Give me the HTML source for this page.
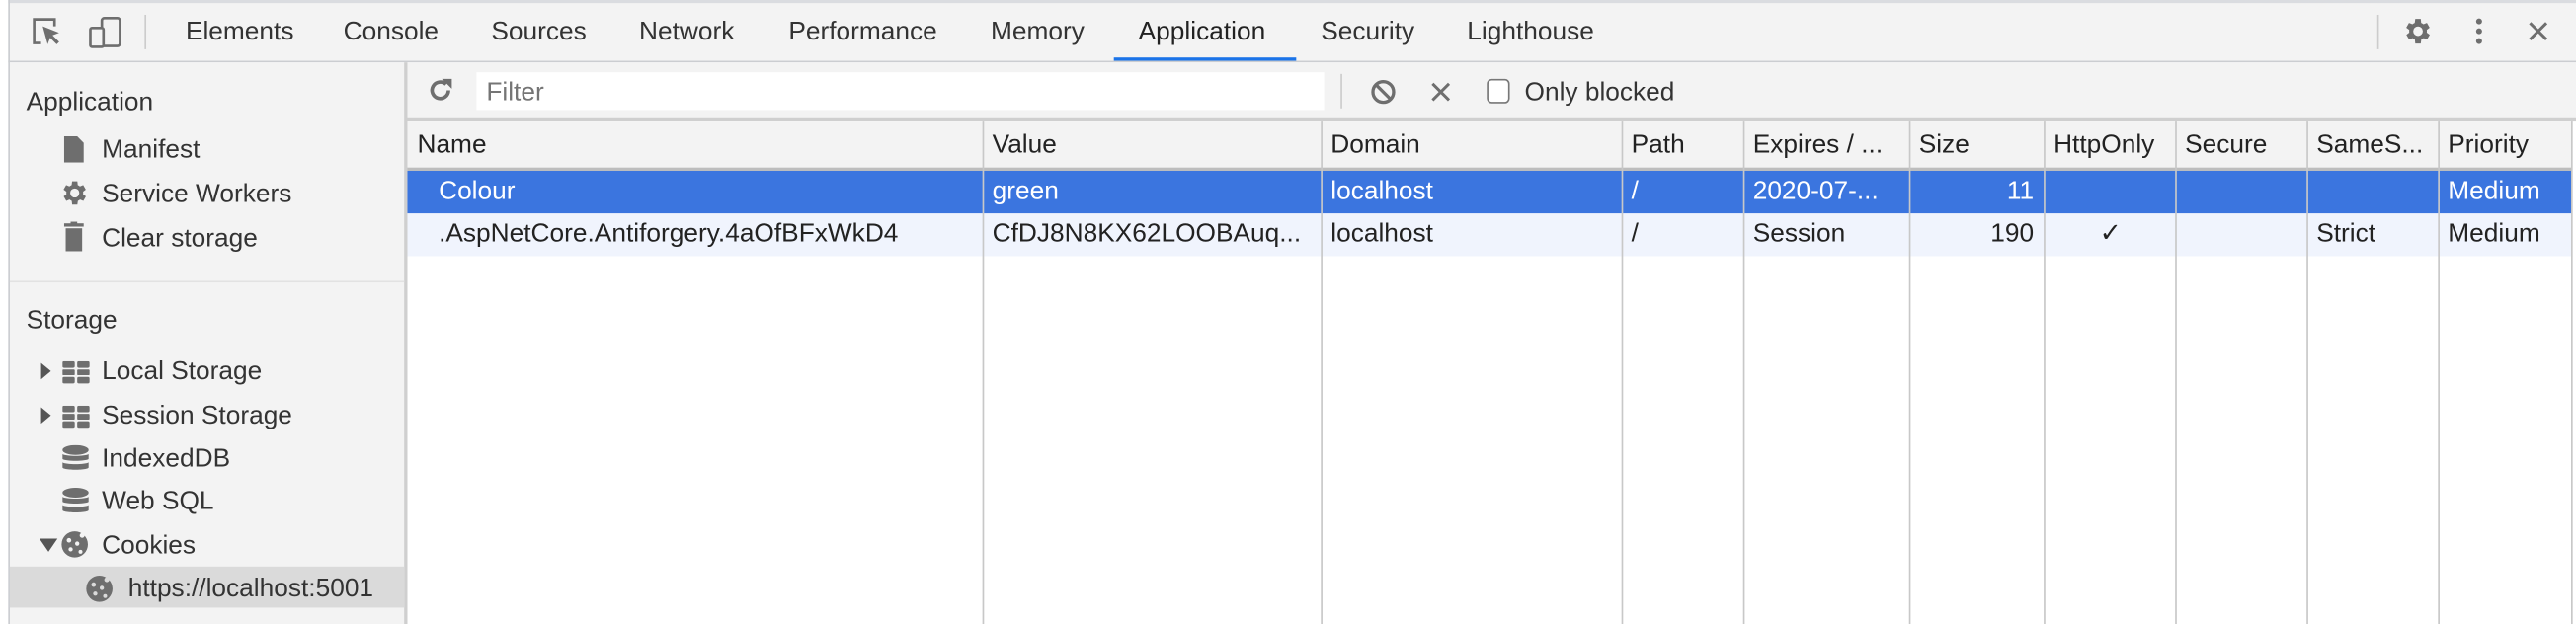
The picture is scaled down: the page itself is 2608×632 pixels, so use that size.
<!DOCTYPE html>
<html><head><meta charset="utf-8"><style>
html,body{margin:0;padding:0;background:#fff;width:2608px;height:632px;overflow:hidden}
#w{position:absolute;left:0;top:0;width:1568px;height:380px;transform:scale(1.66327);transform-origin:0 0;font-family:"Liberation Sans",sans-serif;color:#333;font-size:15.8px}
.a{position:absolute;white-space:nowrap;line-height:18px}
.ico{fill:#6e6e6e}
</style></head><body><div id="w">
<div class="a" style="left:5px;top:0;width:1563px;height:2px;background:#dadce0"></div>
<div class="a" style="left:5px;top:2px;width:1563px;height:35px;background:#f3f3f3"></div>
<div class="a" style="left:5px;top:37px;width:1563px;height:1px;background:#cbcdd1"></div>
<div class="a" style="left:5px;top:0;width:1px;height:380px;background:#cbcdd1"></div>
<svg class="a" style="left:18px;top:10px" width="56" height="20" viewBox="0 0 56 20"><path d="M2 1h14v5h-1.6V2.6H3.6v12.8H7V17H2z" class="ico"/><path d="M8 6l10 4-4 1.5 4 4-1.5 1.5-4-4L11 17z" class="ico"/><rect x="44" y="1" width="11" height="17" rx="1.5" fill="none" stroke="#6e6e6e" stroke-width="1.6"/><rect x="37" y="7" width="8" height="11.5" rx="1" fill="#f3f3f3" stroke="#6e6e6e" stroke-width="1.6"/></svg>
<div class="a" style="left:88px;top:9px;width:1px;height:21px;background:#ccc"></div>
<div class="a" style="left:113px;top:11px">Elements</div>
<div class="a" style="left:209px;top:11px">Console</div>
<div class="a" style="left:299px;top:11px">Sources</div>
<div class="a" style="left:389px;top:11px">Network</div>
<div class="a" style="left:480px;top:11px">Performance</div>
<div class="a" style="left:603px;top:11px">Memory</div>
<div class="a" style="left:693px;top:11px;color:#222">Application</div>
<div class="a" style="left:678px;top:35px;width:111px;height:2px;background:#1a73e8"></div>
<div class="a" style="left:804px;top:11px">Security</div>
<div class="a" style="left:893px;top:11px">Lighthouse</div>
<div class="a" style="left:1447px;top:9px;width:1px;height:21px;background:#ccc"></div>
<svg class="a" style="left:1461px;top:9px" width="20" height="20" viewBox="0 0 24 24"><path class="ico" d="M19.4 13a7.5 7.5 0 000-2l2.1-1.6-2-3.5-2.5 1a7 7 0 00-1.7-1L15 3h-4l-.4 2.9a7 7 0 00-1.7 1l-2.5-1-2 3.5L6.6 11a7.5 7.5 0 000 2l-2.1 1.6 2 3.5 2.5-1a7 7 0 001.7 1L11 21h4l.4-2.9a7 7 0 001.7-1l2.5 1 2-3.5zM13 15.5a3.5 3.5 0 110-7 3.5 3.5 0 010 7z"/></svg>
<svg class="a" style="left:1505px;top:10px" width="8" height="18"><circle cx="4" cy="3" r="1.8" fill="#6e6e6e"/><circle cx="4" cy="9" r="1.8" fill="#6e6e6e"/><circle cx="4" cy="15" r="1.8" fill="#6e6e6e"/></svg>
<svg class="a" style="left:1539px;top:13px" width="12" height="12"><path d="M1 1l10 10M11 1L1 11" stroke="#6e6e6e" stroke-width="1.8"/></svg>
<div class="a" style="left:6px;top:38px;width:240px;height:342px;background:#f3f3f3"></div>
<div class="a" style="left:246px;top:38px;width:2px;height:342px;background:#cfcfcf"></div>
<div class="a" style="left:16px;top:54px">Application</div>
<svg class="a" style="left:39px;top:83px" width="12" height="16"><path d="M0 0h8l4 4v12H0z" fill="#6e6e6e"/></svg>
<div class="a" style="left:62px;top:83px">Manifest</div>
<svg class="a" style="left:36px;top:108px" width="19" height="19" viewBox="0 0 24 24"><path class="ico" d="M19.4 13a7.5 7.5 0 000-2l2.1-1.6-2-3.5-2.5 1a7 7 0 00-1.7-1L15 3h-4l-.4 2.9a7 7 0 00-1.7 1l-2.5-1-2 3.5L6.6 11a7.5 7.5 0 000 2l-2.1 1.6 2 3.5 2.5-1a7 7 0 001.7 1L11 21h4l.4-2.9a7 7 0 001.7-1l2.5 1 2-3.5zM13 15.5a3.5 3.5 0 110-7 3.5 3.5 0 010 7z" transform="translate(-1 0)"/></svg>
<div class="a" style="left:62px;top:110px">Service Workers</div>
<svg class="a" style="left:39px;top:135px" width="12" height="18"><rect x="0" y="1" width="12" height="2" fill="#6e6e6e"/><rect x="4" y="0" width="4" height="2" fill="#6e6e6e"/><rect x="1" y="4" width="10" height="14" fill="#6e6e6e"/></svg>
<div class="a" style="left:62px;top:137px">Clear storage</div>
<div class="a" style="left:6px;top:171px;width:240px;height:1px;background:#e2e2e2"></div>
<div class="a" style="left:16px;top:187px">Storage</div>
<svg class="a" style="left:24px;top:220px" width="8" height="12"><path d="M1 1l6 5-6 5z" fill="#555"/></svg>
<svg class="a" style="left:24px;top:247px" width="8" height="12"><path d="M1 1l6 5-6 5z" fill="#555"/></svg>
<svg class="a" style="left:24px;top:327px" width="12" height="10"><path d="M0 1h11L5.5 9z" fill="#555"/></svg>
<svg class="a" style="left:38px;top:220px" width="17" height="14"><g fill="#6e6e6e"><rect x="0" y="0" width="7.5" height="4" rx="1"/><rect x="9" y="0" width="7.5" height="4" rx="1"/><rect x="0" y="5" width="7.5" height="3.5" rx=".5"/><rect x="9" y="5" width="7.5" height="3.5" rx=".5"/><rect x="0" y="9.5" width="7.5" height="4" rx="1"/><rect x="9" y="9.5" width="7.5" height="4" rx="1"/></g></svg>
<svg class="a" style="left:38px;top:247px" width="17" height="14"><g fill="#6e6e6e"><rect x="0" y="0" width="7.5" height="4" rx="1"/><rect x="9" y="0" width="7.5" height="4" rx="1"/><rect x="0" y="5" width="7.5" height="3.5" rx=".5"/><rect x="9" y="5" width="7.5" height="3.5" rx=".5"/><rect x="0" y="9.5" width="7.5" height="4" rx="1"/><rect x="9" y="9.5" width="7.5" height="4" rx="1"/></g></svg>
<svg class="a" style="left:38px;top:271px" width="16" height="17"><g fill="#6e6e6e"><ellipse cx="8" cy="3" rx="8" ry="3"/><path d="M0 5.5c2 1.5 14 1.5 16 0v3c-2 1.5-14 1.5-16 0z"/><path d="M0 10.5c2 1.5 14 1.5 16 0v3c0 2-16 2-16 0z"/></g></svg>
<svg class="a" style="left:38px;top:297px" width="16" height="17"><g fill="#6e6e6e"><ellipse cx="8" cy="3" rx="8" ry="3"/><path d="M0 5.5c2 1.5 14 1.5 16 0v3c-2 1.5-14 1.5-16 0z"/><path d="M0 10.5c2 1.5 14 1.5 16 0v3c0 2-16 2-16 0z"/></g></svg>
<div class="a" style="left:62px;top:218px">Local Storage</div>
<div class="a" style="left:62px;top:245px">Session Storage</div>
<div class="a" style="left:62px;top:271px">IndexedDB</div>
<div class="a" style="left:62px;top:297px">Web SQL</div>
<svg class="a" style="left:37px;top:322px" width="17" height="18"><circle cx="8.5" cy="9.5" r="8" fill="#6e6e6e"/><g fill="#f3f3f3"><circle cx="5" cy="7" r="1.4"/><circle cx="10" cy="9" r="1.3"/><circle cx="6" cy="12.5" r="1.3"/><circle cx="12" cy="14" r="1.2"/><circle cx="13" cy="4" r="1.5"/></g></svg>
<div class="a" style="left:62px;top:324px">Cookies</div>
<div class="a" style="left:6px;top:345px;width:240px;height:25px;background:#dadada"></div>
<svg class="a" style="left:52px;top:349px" width="17" height="18"><circle cx="8.5" cy="9.5" r="8" fill="#6e6e6e"/><g fill="#dadada"><circle cx="5" cy="7" r="1.4"/><circle cx="10" cy="9" r="1.3"/><circle cx="6" cy="12.5" r="1.3"/><circle cx="12" cy="14" r="1.2"/><circle cx="13" cy="4" r="1.5"/></g></svg>
<div class="a" style="left:78px;top:350px">https://localhost:5001</div>
<div class="a" style="left:248px;top:38px;width:1320px;height:34px;background:#f3f3f3"></div>
<svg class="a" style="left:260px;top:47px" width="16" height="16" viewBox="0 0 16 16"><path d="M13 8a5 5 0 11-1.5-3.6" fill="none" stroke="#6e6e6e" stroke-width="2.2"/><path d="M9 1h6v6z" fill="#6e6e6e"/></svg>
<div class="a" style="left:290px;top:44px;width:516px;height:23px;background:#fff"></div>
<div class="a" style="left:296px;top:48px;color:#757575">Filter</div>
<div class="a" style="left:816px;top:45px;width:1px;height:21px;background:#ccc"></div>
<svg class="a" style="left:834px;top:48px" width="16" height="16"><circle cx="8" cy="8" r="6.3" fill="none" stroke="#6e6e6e" stroke-width="2"/><path d="M3.5 3.5l9 9" stroke="#6e6e6e" stroke-width="2"/></svg>
<svg class="a" style="left:871px;top:50px" width="12" height="12"><path d="M1 1l10 10M11 1L1 11" stroke="#6e6e6e" stroke-width="1.8"/></svg>
<div class="a" style="left:905px;top:48px;width:12px;height:13px;border:1px solid #777;border-radius:3px;background:#fff"></div>
<div class="a" style="left:928px;top:48px">Only blocked</div>
<div class="a" style="left:248px;top:72px;width:1320px;height:2px;background:#cfcfcf"></div>
<div class="a" style="left:248px;top:74px;width:1317px;height:28px;background:#f3f3f3"></div>
<div class="a" style="left:248px;top:102px;width:1317px;height:2px;background:#bdbdbd"></div>
<div class="a" style="left:248px;top:104px;width:1317px;height:26px;background:#3b75df"></div>
<div class="a" style="left:248px;top:130px;width:1317px;height:26px;background:#f0f4fd"></div>
<div class="a" style="left:598px;top:74px;width:1px;height:306px;background:#c8c8c8"></div>
<div class="a" style="left:804px;top:74px;width:1px;height:306px;background:#c8c8c8"></div>
<div class="a" style="left:987px;top:74px;width:1px;height:306px;background:#c8c8c8"></div>
<div class="a" style="left:1061px;top:74px;width:1px;height:306px;background:#c8c8c8"></div>
<div class="a" style="left:1162px;top:74px;width:1px;height:306px;background:#c8c8c8"></div>
<div class="a" style="left:1244px;top:74px;width:1px;height:306px;background:#c8c8c8"></div>
<div class="a" style="left:1324px;top:74px;width:1px;height:306px;background:#c8c8c8"></div>
<div class="a" style="left:1404px;top:74px;width:1px;height:306px;background:#c8c8c8"></div>
<div class="a" style="left:1484px;top:74px;width:1px;height:306px;background:#c8c8c8"></div>
<div class="a" style="left:1565px;top:74px;width:1px;height:306px;background:#c8c8c8"></div>
<div style="color:#222">
<div class="a" style="left:254px;top:80px">Name</div>
<div class="a" style="left:604px;top:80px">Value</div>
<div class="a" style="left:810px;top:80px">Domain</div>
<div class="a" style="left:993px;top:80px">Path</div>
<div class="a" style="left:1067px;top:80px">Expires / ...</div>
<div class="a" style="left:1168px;top:80px">Size</div>
<div class="a" style="left:1250px;top:80px">HttpOnly</div>
<div class="a" style="left:1330px;top:80px">Secure</div>
<div class="a" style="left:1410px;top:80px">SameS...</div>
<div class="a" style="left:1490px;top:80px">Priority</div>
</div>
<div style="color:#fff">
<div class="a" style="left:267px;top:108px">Colour</div>
<div class="a" style="left:604px;top:108px">green</div>
<div class="a" style="left:810px;top:108px">localhost</div>
<div class="a" style="left:993px;top:108px">/</div>
<div class="a" style="left:1067px;top:108px">2020-07-...</div>
<div class="a" style="left:1168px;top:108px;width:70px;text-align:right">11</div>
<div class="a" style="left:1490px;top:108px">Medium</div>
</div>
<div style="color:#222">
<div class="a" style="left:267px;top:134px">.AspNetCore.Antiforgery.4aOfBFxWkD4</div>
<div class="a" style="left:604px;top:134px">CfDJ8N8KX62LOOBAuq...</div>
<div class="a" style="left:810px;top:134px">localhost</div>
<div class="a" style="left:993px;top:134px">/</div>
<div class="a" style="left:1067px;top:134px">Session</div>
<div class="a" style="left:1168px;top:134px;width:70px;text-align:right">190</div>
<div class="a" style="left:1278px;top:134px">✓</div>
<div class="a" style="left:1410px;top:134px">Strict</div>
<div class="a" style="left:1490px;top:134px">Medium</div>
</div>
</div></body></html>
